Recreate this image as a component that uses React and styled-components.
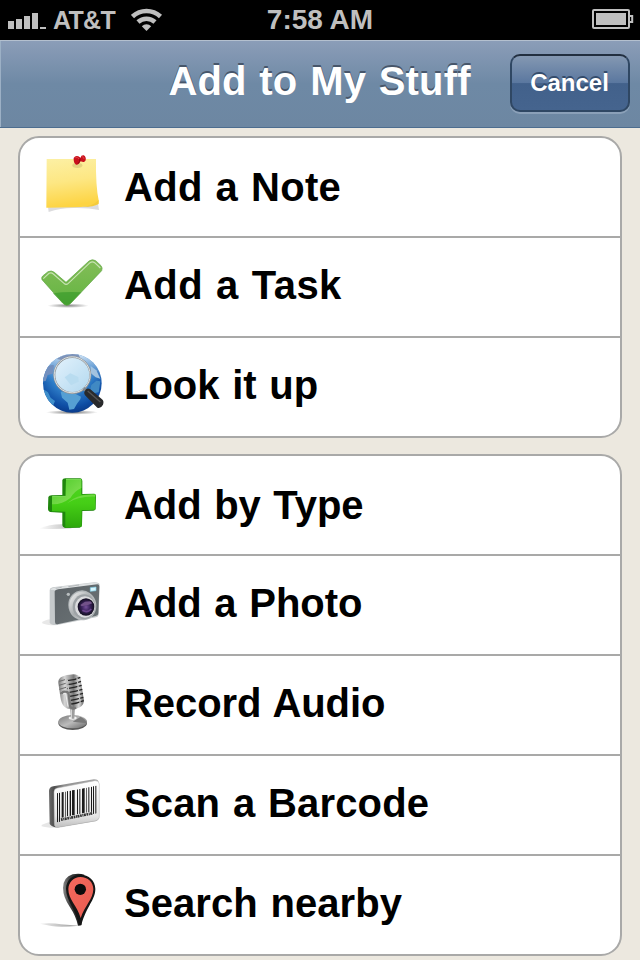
import styled, { createGlobalStyle } from "styled-components";

const GlobalStyle = createGlobalStyle`
    body {
        margin : 0;
        background-color : #ece8df;
        font-family : "Liberation Sans", Arial, sans-serif;
    }
`

const NoteIcon = () => (
    <>
        <defs>
            <linearGradient id="note" x1="0" y1="0" x2="0.15" y2="1">
                <stop offset="0" stopColor="#fcf0a4" />
                <stop offset="0.5" stopColor="#fde783" />
                <stop offset="1" stopColor="#fdd443" />
            </linearGradient>
        </defs>
        <path d="M54 200 L56 216 Q90 204 130 204 Q175 203 207 210 L204 190 Z" fill="#dcdcde" />
        <path d="M50 57 H198 Q197 140 206 181 L205 190 Q180 202 130 202 L49 203 Z" fill="url(#note)" />
        <path d="M158 201 Q190 197 206 180 L206 192 Q188 202 158 201 Z" fill="#f5cb3a" />
        <ellipse cx="142" cy="76" rx="15" ry="8" fill="#cdbd6d" opacity="0.55" />
        <path d="M131 54 Q136 46 145 49 L152 53 Q153 45 161 46 Q169 50 167 61 Q164 68 157 65 L151 64 Q147 75 138 74 Q130 69 131 54 Z" fill="#c9101c" />
        <path d="M136 53 Q143 50 147 57 M156 50 Q163 50 162 57" stroke="#e0403f" strokeWidth="3" fill="none" />
        <path d="M144 71 Q151 66 150 56" stroke="#860713" strokeWidth="3" fill="none" />
    </>
)

const TaskIcon = () => (
    <>
        <defs>
            <linearGradient id="task" x1="0" y1="0" x2="0" y2="1">
                <stop offset="0" stopColor="#83bd58" />
                <stop offset="0.7" stopColor="#6db748" />
                <stop offset="1" stopColor="#55a637" />
            </linearGradient>
            <radialGradient id="taskShadow">
                <stop offset="0" stopColor="#888" />
                <stop offset="1" stopColor="#fff" />
            </radialGradient>
        </defs>
        <ellipse cx="114" cy="182" rx="62" ry="7" fill="url(#taskShadow)" />
        <path d="M36 104 Q33 98 38 93 L54 80 Q64 75 73 82 L108 112 L177 48 Q187 41 197 47 L213 62 Q219 69 215 77 L123 174 Q111 188 98 174 Z" fill="url(#task)" />
        <path d="M69 145 Q108 139 154 142 L123 174 Q111 188 98 174 Z" fill="#3e9d2d" opacity="0.75" />
        <path d="M40 101 L57 85 Q64 81 70 87 L102 115 Q108 121 115 115 L180 53 Q187 48 194 53 L211 69" fill="none" stroke="#c9e3b5" strokeWidth="3.5" />
        <path d="M36 104 Q33 98 38 93 L54 80 Q64 75 73 82 L108 112 L177 48 Q187 41 197 47 L213 62 Q219 69 215 77 L123 174 Q111 188 98 174 Z" fill="none" stroke="#5fa544" strokeWidth="2" />
    </>
)

const GlobeIcon = () => (
    <>
        <defs>
            <radialGradient id="globe" cx="0.48" cy="0.3" r="0.7">
                <stop offset="0" stopColor="#8cc3ea" />
                <stop offset="0.5" stopColor="#2f7fc9" />
                <stop offset="0.85" stopColor="#0e4da4" />
                <stop offset="1" stopColor="#0a3c8c" />
            </radialGradient>
            <linearGradient id="globeTop" x1="0" y1="0" x2="0" y2="1">
                <stop offset="0" stopColor="#e7f0fa" />
                <stop offset="1" stopColor="#5a95d0" stopOpacity="0" />
            </linearGradient>
            <linearGradient id="magnifier" x1="0" y1="0" x2="1" y2="1">
                <stop offset="0" stopColor="#e3f2fc" />
                <stop offset="1" stopColor="#b2d8ef" />
            </linearGradient>
            <radialGradient id="globeShadow">
                <stop offset="0" stopColor="#777" />
                <stop offset="1" stopColor="#fff" />
            </radialGradient>
            <clipPath id="globeClip"><circle cx="127" cy="130" r="88" /></clipPath>
        </defs>
        <ellipse cx="126" cy="217" rx="78" ry="7" fill="url(#globeShadow)" />
        <circle cx="127" cy="130" r="88" fill="url(#globe)" />
        <g clipPath="url(#globeClip)">
            <rect x="36" y="38" width="180" height="90" fill="url(#globeTop)" />
            <path d="M80 57 Q105 38 145 43 L151 54 Q130 45 112 53 L98 61 Z" fill="#7d93ba" />
            <path d="M48 84 Q60 72 72 76 L68 101 L53 105 L47 123 L38 124 Z" fill="#7390be" />
            <path d="M39 147 L54 157 L62 173 L75 183 L69 197 Q45 178 39 147 Z" fill="#3f8fcb" />
            <path d="M92 155 L120 153 L153 170 L151 178 L141 191 L132 207 L118 209 L113 188 L96 173 Z" fill="#559fd3" />
            <path d="M184 135 L199 122 L211 124 L206 157 L190 160 L181 147 Z" fill="#4089c3" />
            <path d="M182 78 L199 91 L211 116 L197 112 L182 99 Z" fill="#a3c3e0" />
        </g>
        <circle cx="127" cy="105" r="53" fill="url(#magnifier)" />
        <path d="M104 112 L121 100 L145 111 L146 125 L123 136 Z" fill="#b9dcf0" />
        <circle cx="127" cy="105" r="54" fill="none" stroke="#8f9599" strokeWidth="6" />
        <circle cx="126.5" cy="104.5" r="54" fill="none" stroke="#dde1e3" strokeWidth="3" />
        <path d="M160 145 L177 157" stroke="#81888e" strokeWidth="10" />
        <path d="M164 154 Q169 141 181 148 L216 178 Q223 184 219 194 Q212 207 202 203 L168 169 Q160 162 164 154 Z" fill="#292a2c" />
        <path d="M173 153 L211 186" stroke="#555" strokeWidth="4" />
    </>
)

const PlusIcon = () => (
    <>
        <defs>
            <linearGradient id="plus" x1="0" y1="0" x2="0" y2="1">
                <stop offset="0" stopColor="#50d723" />
                <stop offset="0.5" stopColor="#45ce16" />
                <stop offset="1" stopColor="#2da80b" />
            </linearGradient>
            <linearGradient id="plusGloss" x1="0" y1="0" x2="1" y2="1">
                <stop offset="0" stopColor="#4aca26" />
                <stop offset="1" stopColor="#8fe35e" />
            </linearGradient>
            <linearGradient id="plusShadow" x1="0" y1="0" x2="1" y2="0">
                <stop offset="0" stopColor="#fff" />
                <stop offset="1" stopColor="#bbb" />
            </linearGradient>
        </defs>
        <path d="M26 191 Q66 175 105 178 L125 190 Q75 194 26 191 Z" fill="url(#plusShadow)" />
        <path d="M97 45 Q98 40 106 40 L151 40 Q157 41 157 48 L157 87 L193 86 Q199 88 198 94 L197 130 Q197 137 190 137 L157 138 L156 181 Q155 187 149 188 L105 189 Q97 186 97 181 L97 143 L60 141 Q53 137 54 130 L55 96 Q57 91 65 91 L97 90 Z" fill="#1f860d" />
        <path d="M108 43 L154 43 V89 L196 88 V134 L155 136 V185 L106 188 V140 L66 139 V94 H107 Z" fill="url(#plus)" />
        <path d="M108 43 L154 43 V69 Q134 78 121 99 Q96 119 66 118 V94 H107 Z" fill="url(#plusGloss)" />
        <path d="M111 115 Q140 86 196 89 V95 Q145 93 111 115 Z" fill="#7ddd50" opacity="0.7" />
        <path d="M108 43 H153 M67 94 H107" stroke="#8ce268" strokeWidth="2" />
    </>
)

const CameraIcon = () => (
    <>
        <defs>
            <linearGradient id="camera" x1="0" y1="0" x2="1" y2="1">
                <stop offset="0" stopColor="#5c6266" />
                <stop offset="1" stopColor="#6b7376" />
            </linearGradient>
            <linearGradient id="lens" x1="0" y1="0" x2="1" y2="1">
                <stop offset="0" stopColor="#f6f6f6" />
                <stop offset="0.5" stopColor="#a7abad" />
                <stop offset="1" stopColor="#ddd" />
            </linearGradient>
            <radialGradient id="glass">
                <stop offset="0" stopColor="#76509a" />
                <stop offset="0.5" stopColor="#3a235c" />
                <stop offset="1" stopColor="#120e1f" />
            </radialGradient>
        </defs>
        <path d="M35 174 Q47 162 65 163 L80 181 Q51 182 35 174 Z" fill="#e8e8e8" />
        <path d="M59 75 Q59 69 68 67 L192 52 Q208 51 209 60 L206 149 Q205 155 198 157 L81 180 Q63 181 59 173 Z" fill="#c5c9cb" />
        <path d="M61 74 Q65 69 80 67 L190 53 Q204 52 206 59 L80 76 Z" fill="#dfe2e3" />
        <path d="M74 79 Q76 74 84 73 L202 58 Q208 58 208 65 L205 145 Q205 151 197 153 L82 178 Q75 179 75 171 Z" fill="url(#camera)" />
        <path d="M77 70 L95 67 M115 65 L147 60" stroke="#a0a5a8" strokeWidth="2" />
        <ellipse cx="157" cy="121" rx="42" ry="45" fill="#b3b8ba" transform="rotate(-12 157 121)" />
        <ellipse cx="156" cy="121" rx="38" ry="41" fill="url(#lens)" />
        <ellipse cx="162" cy="125" rx="34" ry="37" fill="#9da2a5" />
        <ellipse cx="165" cy="126" rx="30" ry="32" fill="#dcdcdf" />
        <ellipse cx="168" cy="126" rx="25" ry="26" fill="url(#glass)" />
        <path d="M151 120 L165 110 L181 109 L187 115 L176 119 L155 124 Z" fill="#725289" />
        <path d="M157 136 Q172 145 184 132" stroke="#6a438b" strokeWidth="5" fill="none" />
        <circle cx="115" cy="88" r="5" fill="#b9bec0" />
        <path d="M181 68 L198 66 V77 L181 79 Z" fill="#d8f5fd" stroke="#7fcfe8" strokeWidth="2" />
    </>
)

const MicIcon = () => (
    <>
        <defs>
            <linearGradient id="mic" x1="0" y1="0" x2="1" y2="0">
                <stop offset="0" stopColor="#777" />
                <stop offset="0.25" stopColor="#d6d6d6" />
                <stop offset="0.6" stopColor="#777" />
                <stop offset="0.8" stopColor="#dcdcdc" />
                <stop offset="1" stopColor="#626262" />
            </linearGradient>
            <linearGradient id="micBase" x1="0" y1="0" x2="1" y2="1">
                <stop offset="0" stopColor="#777" />
                <stop offset="0.5" stopColor="#bbb" />
                <stop offset="1" stopColor="#666" />
            </linearGradient>
        </defs>
        <ellipse cx="128" cy="174" rx="43" ry="21" fill="#585858" />
        <ellipse cx="128" cy="170" rx="43" ry="20" fill="url(#micBase)" />
        <path d="M128 170 L152 155 Q168 163 170 175 Z" fill="#7a7a7a" />
        <ellipse cx="128" cy="159" rx="12" ry="5" fill="#f3f3f3" />
        <path d="M121 130 H135 L133 161 H123 Z" fill="url(#mic)" />
        <path d="M85 54 Q83 32 119 29 Q143 24 151 39 L162 107 Q160 127 137 131 Q115 137 104 126 Q94 117 91 95 Z" fill="url(#mic)" />
        <g stroke="#252525" strokeWidth="4" fill="none">
            <path d="M111 47 Q134 46 151 37" />
            <path d="M111 59 Q137 56 153 49" />
            <path d="M112 71 Q137 67 155 61" />
            <path d="M114 83 Q140 79 157 73" />
            <path d="M116 95 Q141 91 159 85" />
            <path d="M118 107 Q142 103 160 97" />
            <path d="M119 118 Q143 115 161 107" />
        </g>
        <path d="M88 49 L105 44 M87 61 L107 55 M88 73 L108 67 M90 85 L106 79" stroke="#696969" strokeWidth="3" />
        <path d="M112 45 Q116 80 122 122 M141 39 L151 118" stroke="#c1c1c1" strokeWidth="4" fill="none" />
        <path d="M97 87 Q96 79 105 80 Q116 80 116 88 L121 126 Q127 134 138 128" stroke="#777" strokeWidth="7" fill="none" />
        <path d="M99 87 L107 85 L114 125" stroke="#eee" strokeWidth="3" fill="none" />
    </>
)

const BarcodeIcon = () => (
    <>
        <defs>
            <linearGradient id="barcode" x1="0" y1="0" x2="0" y2="1">
                <stop offset="0" stopColor="#fff" />
                <stop offset="0.75" stopColor="#e6e6e6" />
                <stop offset="1" stopColor="#bdbdbd" />
            </linearGradient>
            <linearGradient id="barcodeSide" x1="0" y1="0" x2="1" y2="0">
                <stop offset="0" stopColor="#6b6b6b" />
                <stop offset="0.1" stopColor="#4e4e4e" />
                <stop offset="0.3" stopColor="#8f8f8f" />
                <stop offset="1" stopColor="#aaa" />
            </linearGradient>
        </defs>
        <path d="M33 183 Q46 172 65 171 L87 188 Q52 190 33 183 Z" fill="#e6e6e6" />
        <path d="M57 78 Q57 66 70 64 L191 43 Q205 42 206 52 L207 157 Q206 166 196 169 L86 187 Q67 188 59 177 Z" fill="url(#barcodeSide)" />
        <path d="M72 81 Q72 71 83 69 L195 47 Q207 46 208 57 L208 157 Q207 164 198 167 L86 187 Q73 189 73 176 Z" fill="url(#barcode)" stroke="#b5b5b5" strokeWidth="1.5" />
        <g fill="#1c1c1c">
            <path d="M81 85 L84 84 V171 L81 172 Z" />
            <path d="M87 84 L90 83 V170 L87 171 Z" />
            <path d="M95 82 L101 81 V157 L95 158 Z" />
            <path d="M105 80 L107 80 V155 L105 156 Z" />
            <path d="M111 79 L114 78 V153 L111 154 Z" />
            <path d="M119 78 L123 77 V152 L119 153 Z" />
            <path d="M126 76 L134 75 V150 L126 151 Z" />
            <path d="M141 74 L144 73 V147 L141 148 Z" />
            <path d="M148 72 L151 72 V146 L148 147 Z" />
            <path d="M156 71 L164 69 V143 L156 145 Z" />
            <path d="M168 69 L170 68 V142 L168 143 Z" />
            <path d="M175 67 L178 67 V141 L175 142 Z" />
            <path d="M183 66 L186 65 V140 L183 141 Z" />
            <path d="M189 64 L192 64 V146 L189 147 Z" />
            <path d="M196 63 L199 62 V145 L196 146 Z" />
        </g>
        <path d="M93 164 L187 145" stroke="#333" strokeWidth="8" strokeDasharray="5 2 3 1.5 6 2" />
    </>
)

const PinIcon = () => (
    <>
        <defs>
            <linearGradient id="pinSide" x1="0" y1="0" x2="1" y2="0">
                <stop offset="0" stopColor="#888" />
                <stop offset="0.35" stopColor="#3c3c3c" />
                <stop offset="1" stopColor="#111" />
            </linearGradient>
            <linearGradient id="pin" x1="0" y1="0" x2="1" y2="1">
                <stop offset="0" stopColor="#f4695d" />
                <stop offset="1" stopColor="#e75b50" />
            </linearGradient>
            <linearGradient id="pinShadow" x1="0" y1="0" x2="1" y2="0">
                <stop offset="0" stopColor="#eee" />
                <stop offset="1" stopColor="#999" />
            </linearGradient>
        </defs>
        <path d="M30 176 Q66 173 93 178 L148 182 Q90 188 64 183 Z" fill="url(#pinShadow)" />
        <path d="M99 69 Q99 37 128 28 Q147 24 163 29 L154 181 L144 182 Q137 152 120 127 Q99 96 99 69 Z" fill="url(#pinSide)" />
        <path d="M151 29 C176 29 196 46 196 72 C196 105 170 122 154 180 L147 181 C138 132 109 109 108 71 C109 45 127 29 151 29 Z" fill="#151515" />
        <path d="M151 36 C174 36 190 52 190 73 C189 103 165 121 152 159 C141 121 115 104 115 72 C116 51 131 36 151 36 Z" fill="url(#pin)" />
        <circle cx="151" cy="73" r="17" fill="#0b0b0b" />
    </>
)

const groups = [
    [
        { label: "Add a Note", icon: NoteIcon, top: 2, spacing: 0.3 },
        { label: "Add a Task", icon: TaskIcon, top: 7, spacing: 0.43, lift: 2 },
        { label: "Look it up", icon: GlobeIcon, top: 2, spacing: 0, lift: 2 },
    ],
    [
        { label: "Add by Type", icon: PlusIcon, top: 9, spacing: -0.05 },
        { label: "Add a Photo", icon: CameraIcon, top: 9, spacing: 0, lift: 2 },
        { label: "Record Audio", icon: MicIcon, top: 9, spacing: -0.08, lift: 2 },
        { label: "Scan a Barcode", icon: BarcodeIcon, top: 9, spacing: 0.14, lift: 2 },
        { label: "Search nearby", icon: PinIcon, top: 9, spacing: 0.06, lift: 2 },
    ],
];

const StatusBar = () => (
    <Status>
        <Carrier>
            <svg width="38" height="40" fill="#bfbfbf">
                <path d="M0 21h6v8H0zM8 19h6v10H8zM16 16h6v13h-6zM24 13h6v16h-6zM32 27h6v2h-6z" />
            </svg>
            <span>AT&amp;T</span>
            <svg width="32" height="40" fill="none" stroke="#bfbfbf">
                <path d="M1.5 16.5 A20.5 20.5 0 0 1 29.5 16.5" strokeWidth="4.5" />
                <path d="M7 22 A12.5 12.5 0 0 1 24 22" strokeWidth="4.5" />
                <path d="M15.5 31 L10.8 26.2 A6.8 6.8 0 0 1 20.2 26.2 Z" fill="#bfbfbf" stroke="none" />
            </svg>
        </Carrier>
        <Clock>7:58 AM</Clock>
        <Battery width="42" height="40">
            <rect x="1" y="10" width="36" height="18" rx="1" fill="none" stroke="#bfbfbf" strokeWidth="2" />
            <rect x="4" y="13" width="30" height="12" fill="#bfbfbf" />
            <path d="M38 16h2.2v6H38" fill="none" stroke="#bfbfbf" strokeWidth="2" />
        </Battery>
    </Status>
)

export default function App() {
    return (
        <Screen>
            <GlobalStyle />
            <StatusBar />
            <NavBar>
                <Title>Add to My Stuff</Title>
                <CancelButton>Cancel</CancelButton>
            </NavBar>
            <List>
                {groups.map((rows, index) => (
                    <Group key={index}>
                        {rows.map(({ label, icon: Icon, top, spacing, lift }) => (
                            <Row key={label}>
                                <svg width="94" height="98" viewBox={`0 ${-top * 3} 282 294`}>
                                    <Icon />
                                </svg>
                                <Label $spacing={spacing} $lift={lift}>{label}</Label>
                            </Row>
                        ))}
                    </Group>
                ))}
            </List>
        </Screen>
    )
}

const Screen = styled.div`
    width : 640px;
    height : 960px;
    overflow : hidden;
    display : flex;
    flex-direction : column;
`

const Status = styled.div`
    height : 40px;
    flex-shrink : 0;
    display : grid;
    grid-template-columns : 1fr auto 1fr;
    align-items : center;
    padding : 0 6px 0 8px;
    background-color : #000;
    color : #bfbfbf;
`

const Carrier = styled.div`
    display : flex;
    align-items : center;
    font-size : 25px;
    font-weight : bold;
    letter-spacing : -.7px;
    svg {
        display : block;
    }
    span {
        margin : 0 16px 0 7px;
    }
`

const Clock = styled.div`
    margin-right : 2px;
    font-size : 28px;
    line-height : 32px;
    font-weight : bold;
`

const Battery = styled.svg`
    display : block;
    justify-self : end;
`

const NavBar = styled.div`
    box-sizing : border-box;
    height : 88px;
    flex-shrink : 0;
    display : grid;
    grid-template-columns : 1fr auto 1fr;
    align-items : start;
    padding : 13px 10px 0 9px;
    border-top : 1px solid #b4c0cf;
    border-bottom : 1px solid #4d6d8f;
    background : linear-gradient(#8b9db8, #6e89a5 50%, #6d87a2);
    box-shadow : inset 1px 0 #9cb0c5;
`

const Title = styled.div`
    grid-column : 2;
    margin-top : 4px;
    font-size : 40px;
    line-height : 46px;
    font-weight : bold;
    letter-spacing : .15px;
    word-spacing : 1.5px;
    color : #fff;
    text-shadow : 0 -2px #47566a;
`

const CancelButton = styled.button`
    justify-self : end;
    box-sizing : border-box;
    width : 120px;
    height : 58px;
    padding : 0 1px 0 0;
    border : 2px solid #2f4763;
    border-top-color : #222f40;
    border-radius : 10px;
    background : linear-gradient(#8498b2, #5a779f 50%, #42618b 51%, #45648e);
    box-shadow : 0 2px #8ba0b8;
    font-family : inherit;
    font-size : 24px;
    font-weight : bold;
    color : #fff;
    text-shadow : 0 -2px #344c6c;
`

const List = styled.div`
    display : flex;
    flex-direction : column;
    gap : 16px;
    padding : 8px 18px;
`

const Group = styled.div`
    border : 2px solid #a9a9a8;
    border-radius : 21px;
    background-color : #fff;
    overflow : hidden;
`

const Row = styled.div`
    height : 98px;
    display : flex;
    align-items : center;
    padding-left : 10px;
    & + & {
        border-top : 2px solid #a9a9a8;
    }
    svg {
        display : block;
        flex-shrink : 0;
    }
`

const Label = styled.div`
    padding-bottom : ${(props) => (props.$lift || 0) * 2}px;
    font-size : 40px;
    line-height : 46px;
    font-weight : bold;
    letter-spacing : ${(props) => props.$spacing}px;
    word-spacing : 1.5px;
    white-space : nowrap;
    color : #000;
`
